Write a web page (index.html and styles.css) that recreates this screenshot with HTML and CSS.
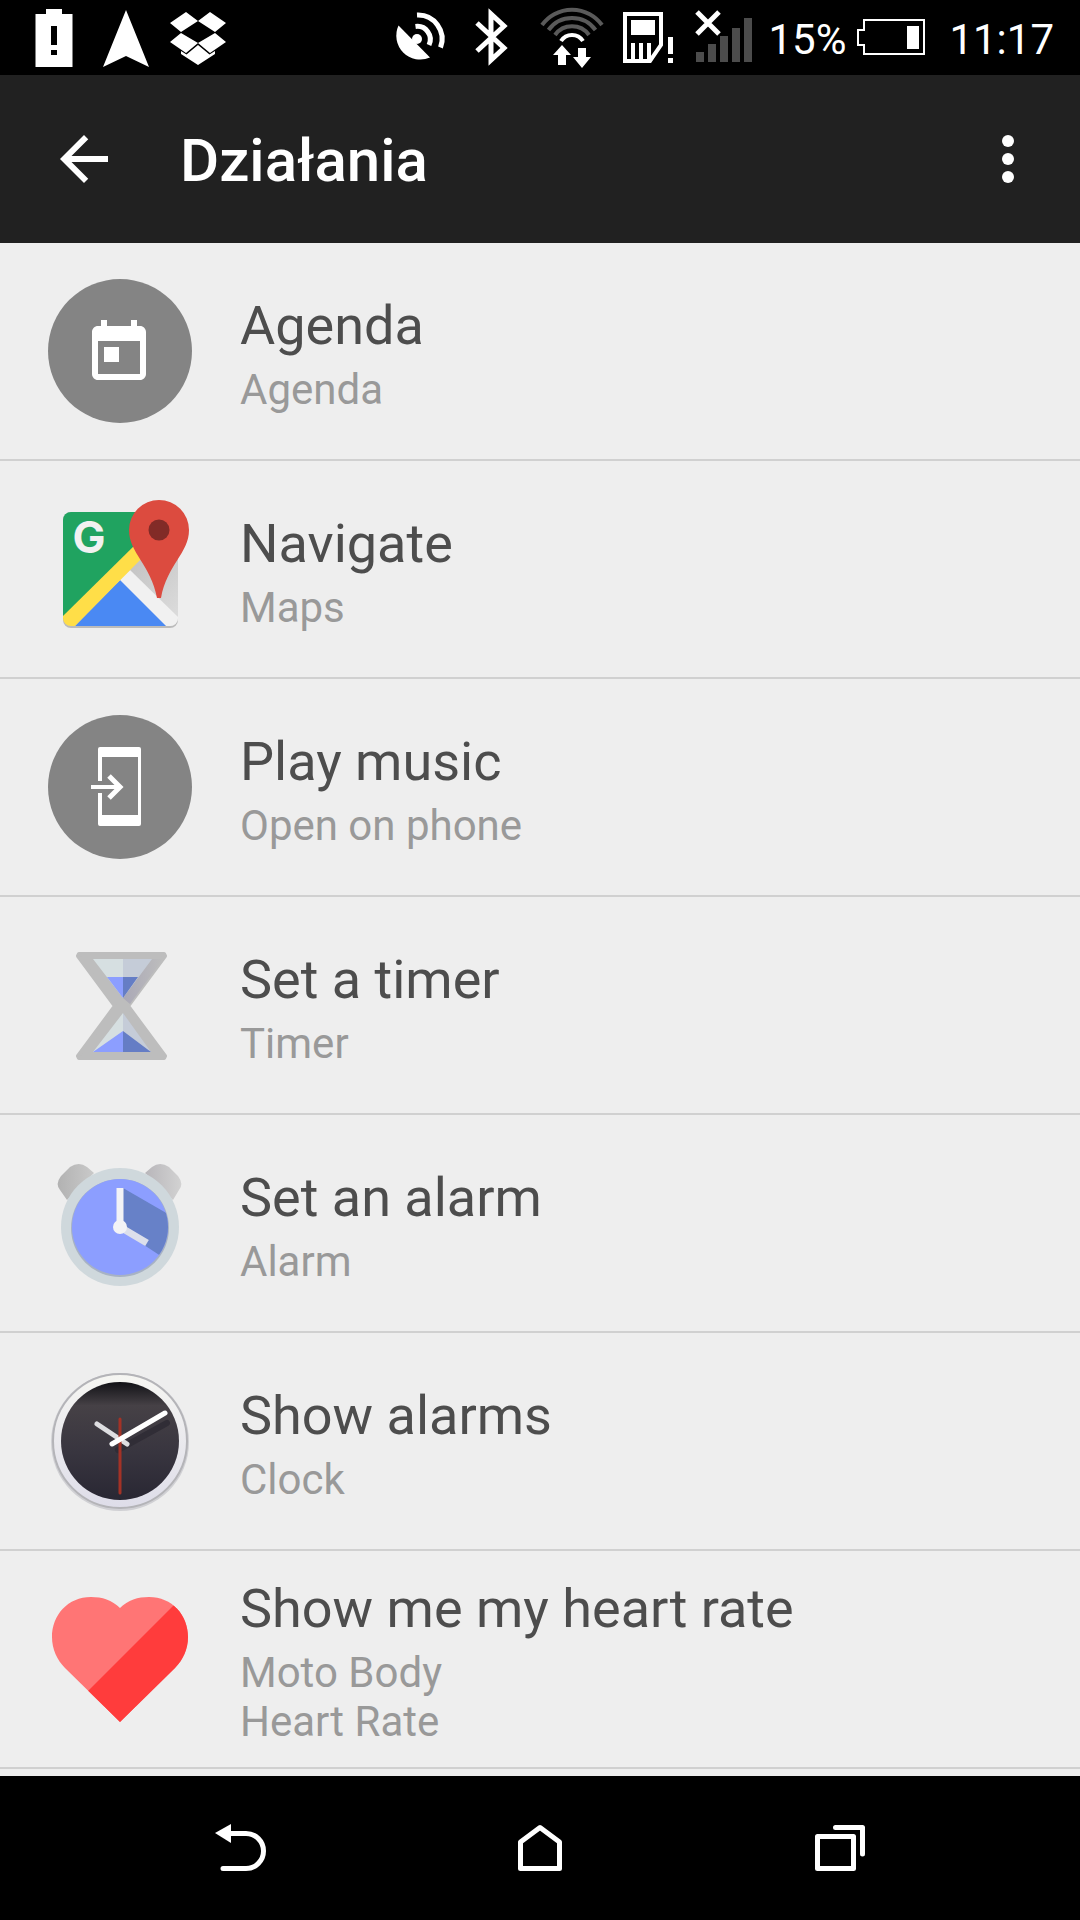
FILE: index.html
```html
<!DOCTYPE html>
<html lang="pl">
<head>
    <meta charset="UTF-8">
    <meta name="viewport" content="width=device-width, initial-scale=1.0">
    <title>Działania</title>
    <link rel="stylesheet" href="styles.css">
</head>
<body>
    <div class="status-bar">
        <div class="status-group">
            <svg class="status-icon" viewBox="-36 0 72 75" aria-hidden="true">
                <path fill="#fff" fill-rule="evenodd" d="M-8 9H8v5H18.500V67H-18.500V14H-8zM-3 26V45H3V26zM-3 50V55H3V50z"/>
            </svg>
            <svg class="status-icon" viewBox="-36 0 72 75" aria-hidden="true">
                <path fill="#fff" d="M0 10L23 67L0 56L-23 67z"/>
            </svg>
            <svg class="status-icon" viewBox="-36 0 72 75" aria-hidden="true">
                <path fill="#fff" d="M-12 12L0 21L-17 32L-28 23zM12 12L0 21L17 32L28 23zM-17 33L0 43L-12 53L-28 42zM17 33L0 43L12 53L28 42zM0 45L11.500 54.500L17 51V54L0 65L-17 54V51L-11.500 54.500z"/>
            </svg>
        </div>
        <div class="status-group">
            <svg class="status-icon" viewBox="-36 0 72 75" aria-hidden="true">
                <path fill="#fff" d="M-21.500 25.500A24 24 0 0 0 10 57.500z"/>
                <circle cx="-3" cy="39" r="5" fill="#fff"/>
                <g fill="none" stroke="#fff" stroke-width="5">
                    <path d="M-4.500 26.500A13 13 0 0 1 9 45"/>
                    <path d="M-3 15A24 24 0 0 1 20.500 47.500"/>
                </g>
            </svg>
            <svg class="status-icon" viewBox="-36 0 72 75" aria-hidden="true">
                <path fill="none" stroke="#fff" stroke-width="5" d="M-15 23L12 48L-1 60V14L12 26L-15 51"/>
            </svg>
            <svg class="status-icon wide" viewBox="-44 0 88 75" aria-hidden="true">
                <g fill="none" stroke="#5a5a5a" stroke-width="4">
                    <path d="M-30 25A37 37 0 0 1 30 25"/>
                    <path d="M-23.500 30A29 29 0 0 1 23.500 30"/>
                    <path d="M-17 35A21 21 0 0 1 17 35"/>
                </g>
                <path fill="none" stroke="#fff" stroke-width="4" d="M-11 41A13 13 0 0 1 11 41"/>
                <path fill="#fff" d="M-10 45L-1 55H-6V65H-14V55H-19zM6 48H14V57H19L10 68L1 57H6z"/>
            </svg>
            <svg class="status-icon narrow" viewBox="-32 0 64 75" aria-hidden="true">
                <path fill="none" stroke="#fff" stroke-width="4" d="M-23 14H13V45L2 61H-23z"/>
                <path fill="#fff" d="M-17 20H7V35H-17zM-17 43h4v18h-4zM-9 43h4v18h-4zM-1 43h4v18h-4zM20 37h5v17h-5zM20 58h5v5h-5z"/>
            </svg>
            <svg class="status-icon wide" viewBox="-44 0 88 75" aria-hidden="true">
                <path fill="#4c4c4c" d="M-28 52h8v10h-8zM-16 44h8v18h-8zM-4 36h8v26h-8zM8 28h8v34H8zM20 18h8v44h-8z"/>
                <path fill="none" stroke="#fff" stroke-width="5" d="M-27 12L-5 34M-5 12L-27 34"/>
            </svg>
            <span>15%</span>
            <svg class="battery" viewBox="0 0 68 75" aria-hidden="true">
                <path fill="none" stroke="#fff" stroke-width="2" d="M7 20H67V54H7V45H1V30H7z"/>
                <path fill="#fff" d="M50 26H62V49H50z"/>
            </svg>
            <time>11:17</time>
        </div>
    </div>

    <header class="app-bar">
        <button class="icon-button" type="button" aria-label="Wstecz">
            <svg viewBox="0 0 24 24"><path d="M20 11H7.830l5.590-5.590L12 4l-8 8 8 8 1.410-1.410L7.830 13H20v-2z"/></svg>
        </button>
        <h1>Działania</h1>
        <button class="icon-button" type="button" aria-label="Więcej opcji">
            <svg viewBox="0 0 24 24"><circle cx="12" cy="6" r="2"/><circle cx="12" cy="12" r="2"/><circle cx="12" cy="18" r="2"/></svg>
        </button>
    </header>

    <main>
        <ul class="actions">
            <li>
                <a class="action" href="#agenda">
                    <svg class="action-icon" viewBox="0 0 144 144" aria-hidden="true">
                        <circle cx="72" cy="72" r="72" fill="#848484"/>
                        <path fill="#fff" transform="translate(35 38) scale(3)" d="M19 3h-1V1h-2v2H8V1H6v2H5c-1.110 0-2 .9-2 2v14c0 1.100.9 2 2 2h14c1.100 0 2-.9 2-2V5c0-1.100-.9-2-2-2zm0 16H5V8h14v11zM7 10h5v5H7z"/>
                    </svg>
                    <span class="action-text">
                        <span class="action-title">Agenda</span>
                        <span class="action-app">Agenda</span>
                    </span>
                </a>
            </li>
            <li>
                <a class="action" href="#navigate">
                    <svg class="action-icon" viewBox="0 0 144 144" aria-hidden="true">
                        <defs>
                            <clipPath id="map-tile"><rect x="15" y="15" width="115" height="114" rx="8"/></clipPath>
                            <linearGradient id="map-shade" x1="0" y1="0" x2="1" y2="1">
                                <stop offset="0.4" stop-color="#bdbdbd"/>
                                <stop offset="1" stop-color="#dedede"/>
                            </linearGradient>
                        </defs>
                        <rect x="15" y="17" width="115" height="114" rx="8" fill="#bbb"/>
                        <g clip-path="url(#map-tile)">
                            <path fill="url(#map-shade)" d="M15 15H130V129H15z"/>
                            <path fill="#20a360" d="M15 15H120L15 122z"/>
                            <path fill="#f1f1f1" d="M68 86L82 73L132 122V129H118z"/>
                            <path fill="#4a89f3" d="M72 83L118 129H27z"/>
                            <path fill="#ffde48" d="M13 121L88 47L99 56L27 129H13z"/>
                        </g>
                        <text class="map-letter" x="41" y="56" text-anchor="middle">G</text>
                        <path fill="#dc4b3f" d="M111 3A30 30 0 0 1 141 33C141 56 119 68 113 101H109C103 68 81 56 81 33A30 30 0 0 1 111 3z"/>
                        <circle cx="111" cy="33" r="10.500" fill="#822b27"/>
                    </svg>
                    <span class="action-text">
                        <span class="action-title">Navigate</span>
                        <span class="action-app">Maps</span>
                    </span>
                </a>
            </li>
            <li>
                <a class="action" href="#music">
                    <svg class="action-icon" viewBox="0 0 144 144" aria-hidden="true">
                        <circle cx="72" cy="72" r="72" fill="#848484"/>
                        <path fill="#fff" d="M52 32H91Q93 32 93 34V109Q93 111 91 111H52Q50 111 50 109V78H54V100H90V42H54V66H50V34Q50 32 52 32z"/>
                        <path fill="none" stroke="#fff" stroke-width="4" d="M43 72H71"/>
                        <path fill="none" stroke="#fff" stroke-width="5" d="M61 61L72 72L61 83"/>
                    </svg>
                    <span class="action-text">
                        <span class="action-title">Play music</span>
                        <span class="action-app">Open on phone</span>
                    </span>
                </a>
            </li>
            <li>
                <a class="action" href="#timer">
                    <svg class="action-icon" viewBox="0 0 144 144" aria-hidden="true">
                        <defs>
                            <linearGradient id="frame-shade">
                                <stop offset="0" stop-color="#aaa8b6"/>
                                <stop offset="1" stop-color="#bdbdbd"/>
                            </linearGradient>
                        </defs>
                        <path fill="#bdbdbd" stroke="#bdbdbd" stroke-width="4" stroke-linejoin="round" d="M31 21H116L117 23L80 73L117 123L116 125H31L30 123L67 73L30 23z"/>
                        <path fill="url(#frame-shade)" d="M104 26H115L82 71L75 65z"/>
                        <path fill="#d6dfe1" d="M45 26H75V65zM75 80V119H45z"/>
                        <path fill="#c5ccd8" d="M75 26H104L75 65zM75 80L103 119H75z"/>
                        <path fill="#8c9eff" d="M59 44H75V65zM75 98V119H45z"/>
                        <path fill="#657dc5" d="M75 44H90L75 65zM75 98L103 119H75z"/>
                    </svg>
                    <span class="action-text">
                        <span class="action-title">Set a timer</span>
                        <span class="action-app">Timer</span>
                    </span>
                </a>
            </li>
            <li>
                <a class="action" href="#alarm">
                    <svg class="action-icon" viewBox="0 0 144 144" aria-hidden="true">
                        <defs>
                            <linearGradient id="bell-left"><stop offset="0" stop-color="#b2b2b2"/><stop offset="1" stop-color="#c9c9c9"/></linearGradient>
                            <linearGradient id="bell-right"><stop offset="0" stop-color="#b8b6ba"/><stop offset="1" stop-color="#d2d2d2"/></linearGradient>
                            <clipPath id="alarm-face"><circle cx="72" cy="76" r="48"/></clipPath>
                        </defs>
                        <path fill="url(#bell-left)" d="M19 49L12 39Q7 33 13 25L22 16Q31 10 39 16L46 22z"/>
                        <path fill="url(#bell-right)" d="M125 49L131 39Q136 33 130 25L121 16Q112 10 104 16L97 22z"/>
                        <circle cx="72" cy="76" r="59" fill="#cfd8dc"/>
                        <circle cx="72" cy="77" r="49" fill="#a7b2c4"/>
                        <circle cx="72" cy="76" r="48" fill="#8c9eff"/>
                        <path clip-path="url(#alarm-face)" fill="#6781c8" d="M75 37L125 66V113L96 94L72 76z"/>
                        <path fill="none" stroke="#dcdfeb" stroke-width="7" d="M72 76L99 92"/>
                        <path fill="none" stroke="#f3f3f6" stroke-width="7" d="M72 76V37"/>
                        <circle cx="72" cy="76" r="7" fill="#f3f3f6"/>
                    </svg>
                    <span class="action-text">
                        <span class="action-title">Set an alarm</span>
                        <span class="action-app">Alarm</span>
                    </span>
                </a>
            </li>
            <li>
                <a class="action" href="#clock">
                    <svg class="action-icon" viewBox="0 0 144 144" aria-hidden="true">
                        <defs>
                            <linearGradient id="clock-rim" x2="0" y2="1"><stop offset="0" stop-color="#f6f6f2"/><stop offset="1" stop-color="#dedde9"/></linearGradient>
                            <linearGradient id="clock-face" x2="0" y2="1">
                                <stop offset="0" stop-color="#121216"/>
                                <stop offset="0.2" stop-color="#464146"/>
                                <stop offset="0.6" stop-color="#38353f"/>
                                <stop offset="1" stop-color="#292733"/>
                            </linearGradient>
                        </defs>
                        <circle cx="72" cy="73" r="69" fill="#d0d0d4"/>
                        <circle cx="72" cy="72" r="67" fill="url(#clock-rim)" stroke="#b4b4b8" stroke-width="2"/>
                        <circle cx="72" cy="72" r="59" fill="url(#clock-face)"/>
                        <g fill="none" stroke-linecap="round">
                            <path stroke="#302d36" stroke-width="6" d="M70 81L119 54"/>
                            <path stroke="#dedee1" stroke-width="5" d="M49 55L79 75"/>
                            <path stroke="#a33226" stroke-width="3" d="M72 50V124"/>
                            <path stroke="#fff" stroke-width="5" d="M64 75L117 44"/>
                        </g>
                    </svg>
                    <span class="action-text">
                        <span class="action-title">Show alarms</span>
                        <span class="action-app">Clock</span>
                    </span>
                </a>
            </li>
            <li>
                <a class="action" href="#heart-rate">
                    <svg class="action-icon" viewBox="0 0 144 144" aria-hidden="true">
                        <defs>
                            <clipPath id="heart"><path d="M72 21C64 13 54 10 43 10C20 10 4 28 4 50C4 62 9 73 17 81L72 135L127 81C135 73 140 62 140 50C140 28 124 10 101 10C90 10 80 13 72 21z"/></clipPath>
                        </defs>
                        <g clip-path="url(#heart)">
                            <path fill="#ff7575" d="M0 0H144V144H0z"/>
                            <path fill="#ff3c3c" d="M144 0V144H0z"/>
                        </g>
                    </svg>
                    <span class="action-text">
                        <span class="action-title">Show me my heart rate</span>
                        <span class="action-app">Moto Body</span>
                        <span class="action-app">Heart Rate</span>
                    </span>
                </a>
            </li>
        </ul>
    </main>

    <nav class="nav-bar">
        <button type="button" aria-label="Back">
            <svg viewBox="0 0 72 72">
                <path fill="#fff" d="M11 21L27 12V31z"/>
                <path fill="none" stroke="#fff" stroke-width="5" stroke-linecap="round" d="M25 21.500H42A17.500 17.500 0 0 1 42 56.500H19"/>
            </svg>
        </button>
        <button type="button" aria-label="Home">
            <svg viewBox="0 0 72 72">
                <path fill="none" stroke="#fff" stroke-width="5" stroke-linejoin="round" d="M36 15.500L55.500 30V56.500H16.500V30z"/>
            </svg>
        </button>
        <button type="button" aria-label="Recent apps">
            <svg viewBox="0 0 72 72">
                <path fill="none" stroke="#fff" stroke-width="5" stroke-linecap="round" stroke-linejoin="round" d="M13.500 24.500H49.500V56.500H13.500zM31.500 15.500H58.500V42"/>
            </svg>
        </button>
    </nav>
</body>
</html>
```

FILE: styles.css
```css
* { box-sizing: border-box; }
body {
    margin: 0;
    min-height: 100vh;
    display: flex;
    flex-direction: column;
    background: #eee;
    font-family: Roboto, "Noto Sans", sans-serif;
}
svg { display: block; flex: none; }
button {
    padding: 0;
    border: 0;
    background: none;
}

/* status bar */
.status-bar {
    display: flex;
    justify-content: space-between;
    padding: 0 26px 0 18px;
    background: #000;
    color: #fff;
    font-size: 42px;
    line-height: 80px;
    height: 75px;
}
.status-group { display: flex; }
.status-icon { width: 72px; height: 75px; }
.status-icon.wide { width: 88px; }
.status-icon.narrow { width: 64px; }
.battery {
    width: 68px;
    height: 75px;
    margin: 0 24px 0 11px;
}

/* app bar */
.app-bar {
    display: flex;
    align-items: center;
    height: 168px;
    padding: 0 36px 0 48px;
    background: #212121;
    color: #fff;
}
.app-bar h1 {
    flex: 1;
    margin: 0 0 0 60px;
    padding-top: 4px;
    font-size: 60px;
    font-weight: 500;
    line-height: 70px;
}
.icon-button svg {
    width: 72px;
    height: 72px;
    fill: #fff;
}

/* list */
main { flex: 1; }
.actions {
    margin: 0;
    padding: 0;
    list-style: none;
}
.action {
    display: flex;
    align-items: center;
    gap: 48px;
    min-height: 218px;
    padding: 0 48px;
    border-bottom: 2px solid #d0d0d0;
    color: #4d4d4d;
    text-decoration: none;
}
.action-icon { width: 144px; height: 144px; }
.action-text { padding-top: 5px; }
.action-title, .action-app { display: block; }
.action-title {
    margin-bottom: 8px;
    font-size: 54px;
    line-height: 63px;
}
.action-app {
    color: #999;
    font-size: 42px;
    line-height: 49px;
}
.map-letter {
    fill: #f1f1f1;
    font-family: Inter, sans-serif;
    font-size: 44px;
    font-weight: 700;
}

/* navigation bar */
.nav-bar {
    display: flex;
    height: 144px;
    padding: 0 90px;
    background: #000;
}
.nav-bar button {
    flex: 1;
    display: flex;
    align-items: center;
    justify-content: center;
}
.nav-bar svg { width: 72px; height: 72px; }
```
